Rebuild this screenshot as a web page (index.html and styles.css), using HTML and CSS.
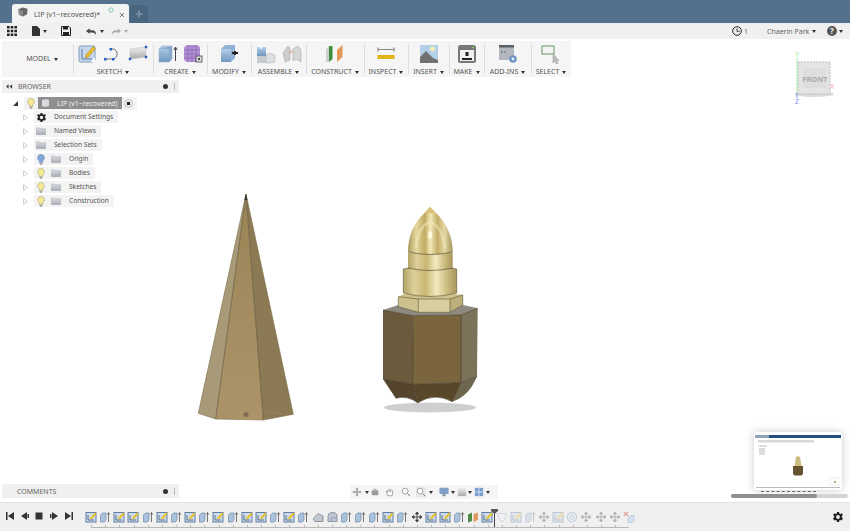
FILE: index.html
```html
<!DOCTYPE html>
<html lang="en">
<head>
<meta charset="utf-8">
<title>LIP (v1~recovered)*</title>
<link rel="stylesheet" href="styles.css">
</head>
<body>
<svg class="defs" aria-hidden="true">
  <defs>
    <linearGradient id="gold" x1="0" x2="1" y1="0" y2="0">
      <stop offset="0" stop-color="#b3a465"/><stop offset=".2" stop-color="#ddd09a"/><stop offset=".42" stop-color="#c9b774"/><stop offset=".62" stop-color="#f2ebc0"/><stop offset=".8" stop-color="#cfc085"/><stop offset="1" stop-color="#a8965a"/>
    </linearGradient>
    <linearGradient id="bullet" x1="0" x2="1" y1="0" y2="0">
      <stop offset="0" stop-color="#a8995c"/><stop offset=".18" stop-color="#e4d9a0"/><stop offset=".38" stop-color="#c2ab62"/><stop offset=".5" stop-color="#f2e9bb"/><stop offset=".66" stop-color="#c4ae68"/><stop offset=".82" stop-color="#e3d8a5"/><stop offset="1" stop-color="#a2925a"/>
    </linearGradient>
    <linearGradient id="pyr" x1="0" x2="0" y1="0" y2="1"><stop offset="0" stop-color="#9a8456"/><stop offset="1" stop-color="#ac9468"/></linearGradient>
    <linearGradient id="blueBox" x1="0" x2="0" y1="0" y2="1"><stop offset="0" stop-color="#b5cfe8"/><stop offset="1" stop-color="#6f97c0"/></linearGradient>
    <linearGradient id="grayBox" x1="0" x2="0" y1="0" y2="1"><stop offset="0" stop-color="#f0f0f0"/><stop offset="1" stop-color="#a9a9a9"/></linearGradient>
    <linearGradient id="folder" x1="0" x2="0" y1="0" y2="1"><stop offset="0" stop-color="#dcdfe4"/><stop offset="1" stop-color="#a4a9b2"/></linearGradient>
    <symbol id="sk" viewBox="0 0 12 12"><rect x="1" y="1.500" width="10" height="9.500" fill="#cfdcec" stroke="#5d7da6"/><path d="M3 9V4M3 9H9" stroke="#456" fill="none" stroke-width=".8"/><path d="M5 7 10 1.500 11.500 3 6.500 8.500Z" fill="#e9c22b"/></symbol>
    <symbol id="ex" viewBox="0 0 12 12"><path d="M1.500 4 3.500 2H7V9L5.500 11H1.500Z" fill="#a9c3de" stroke="#7189a3" stroke-width=".7"/><path d="M9.500 11V2M8.300 3.500 9.500 1.500 10.700 3.500" stroke="#555" fill="none" stroke-width=".8"/></symbol>
    <symbol id="ch" viewBox="0 0 12 12"><path d="M1 8 6 2.500 11 5V10.500H3Z" fill="#c2c8d0" stroke="#7c8590" stroke-width=".8"/></symbol>
    <symbol id="fi" viewBox="0 0 12 12"><path d="M2 10.500V5A4 4 0 0 1 6 1.500 4 4 0 0 1 11 6V10.500Z" fill="#bfc9d6" stroke="#7c8590" stroke-width=".8"/><path d="M5 10V7H10" fill="none" stroke="#88a" stroke-width=".7"/></symbol>
    <symbol id="mv" viewBox="0 0 12 12"><path d="M6 1V11M1 6H11M6 1 4.500 3H7.500ZM6 11 4.500 9H7.500ZM1 6 3 4.500V7.500ZM11 6 9 4.500V7.500Z" stroke="#444" fill="#444" stroke-width=".9"/></symbol>
    <symbol id="pl" viewBox="0 0 12 12"><path d="M1 3.500 5 1.500V10L1 11.500Z" fill="#4d8a45"/><path d="M6.500 3 11 1.500V9L6.500 11Z" fill="#e09a5f"/></symbol>
    <symbol id="sh" viewBox="0 0 12 12"><path d="M1.500 2.500H10.500L9 8 6 11 3 8Z" fill="#eef2f6" stroke="#9aa6b3"/></symbol>
    <symbol id="ri" viewBox="0 0 12 12"><circle cx="6" cy="6" r="4.700" fill="none" stroke="#7d9fc6" stroke-width="1.200"/><circle cx="6" cy="6" r="2.600" fill="#c6d4e4" stroke="#7d9fc6" stroke-width=".8"/></symbol>
    <symbol id="de" viewBox="0 0 12 12"><path d="M1 1 5 5M5 1 1 5" stroke="#d65a5a" stroke-width="1.100"/><path d="M5 6 8 4.500H11V10L9.500 11.500H5Z" fill="#bdd4ea" stroke="#86a7c8" stroke-width=".7"/></symbol>
    <symbol id="bulb" viewBox="0 0 8 11"><path d="M4 .5A3.300 3.300 0 0 1 5.800 6.600V8.300H2.200V6.600A3.300 3.300 0 0 1 4 .5Z" fill="#f4ea94" stroke="#a9a27a" stroke-width=".6"/><path d="M2.500 9.200H5.500M3 10.300H5" stroke="#888" stroke-width=".8"/></symbol>
    <symbol id="bulbB" viewBox="0 0 8 11"><path d="M4 .5A3.300 3.300 0 0 1 5.800 6.600V8.300H2.200V6.600A3.300 3.300 0 0 1 4 .5Z" fill="#7fa9dc" stroke="#6584a8" stroke-width=".6"/><path d="M2.500 9.200H5.500M3 10.300H5" stroke="#888" stroke-width=".8"/></symbol>
    <symbol id="fold" viewBox="0 0 10 8"><path d="M.3 1H3.800L4.600 1.800H9.700V7.700H.3Z" fill="url(#folder)" stroke="#a4a8af" stroke-width=".5"/></symbol>
    <symbol id="tri" viewBox="0 0 5 7"><path d="M.6.7 4.400 3.500.6 6.300Z" fill="#fff" stroke="#b4b4b4" stroke-width=".7"/></symbol>
  </defs>
</svg>

<div class="app">
  <header class="titlebar">
    <div class="tab">
      <svg class="tab-cube" viewBox="0 0 11 11"><path d="M.5 2.500 5 .5 10.500 2 10 8 5.500 10.500 1 8.500Z" fill="#666"/><path d="M.5 2.500 5.500 4.300V10.500L1 8.500Z" fill="#8a8a8a"/></svg>
      <span class="tab-name">LIP (v1~recovered)*</span>
      <svg class="tab-spin" viewBox="0 0 7 7"><circle cx="3.500" cy="3.500" r="2.500" fill="none" stroke="#74c4b0"/></svg>
      <svg class="tab-x" viewBox="0 0 7 7"><path d="M1 1 6 6M6 1 1 6" stroke="#666" stroke-width="1"/></svg>
    </div>
    <div class="tab-new">
      <svg viewBox="0 0 8 8"><path d="M4 .5V7.500M.5 4H7.500" stroke="#7d93a9" stroke-width="1.600"/></svg>
    </div>
  </header>

  <div class="appbar">
    <svg class="ic-grid" viewBox="0 0 10 10"><path d="M0 0H2.600V2.600H0ZM3.700 0H6.300V2.600H3.700ZM7.400 0H10V2.600H7.400ZM0 3.700H2.600V6.300H0ZM3.700 3.700H6.300V6.300H3.700ZM7.400 3.700H10V6.300H7.400ZM0 7.400H2.600V10H0ZM3.700 7.400H6.300V10H3.700ZM7.400 7.400H10V10H7.400Z" fill="#222"/></svg>
    <svg class="ic-doc" viewBox="0 0 8 10"><path d="M0 0H5L8 3V10H0Z" fill="#333"/></svg>
    <span class="caret cr-doc"></span>
    <svg class="ic-save" viewBox="0 0 10 10"><path d="M.5.5H8L9.500 2V9.500H.5Z" fill="none" stroke="#222"/><path d="M2 1H7V3.500H2ZM2 6H8V9H2Z" fill="#222"/></svg>
    <svg class="ic-undo" viewBox="0 0 11 7"><path d="M0 3 4 0V2H7Q11 2 11 7 9 4.500 7 4.500H4V6Z" fill="#444"/></svg>
    <span class="caret cr-undo"></span>
    <svg class="ic-redo" viewBox="0 0 11 7"><path d="M11 3 7 0V2H4Q0 2 0 7 2 4.500 4 4.500H7V6Z" fill="#aaa"/></svg>
    <span class="caret caret-off"></span>
    <span class="spacer"></span>
    <svg class="ic-clock" viewBox="0 0 10 10"><circle cx="5" cy="5" r="4.300" fill="none" stroke="#222"/><path d="M5 2.500V5.300H7.500" fill="none" stroke="#222" stroke-width=".9"/></svg>
    <span class="job-count">1</span>
    <span class="user">Chaerin Park</span>
    <span class="caret cr-user"></span>
    <svg class="ic-help" viewBox="0 0 10 10"><circle cx="5" cy="5" r="5" fill="#555"/><text x="5" y="7.800" class="help-q">?</text></svg>
    <span class="caret cr-help"></span>
  </div>

  <main class="canvas">
    <svg class="scene" viewBox="0 0 850 463" aria-hidden="true">
      <g transform="translate(0,-39)">
        <!-- pyramid -->
        <path d="M246 194 198.300 413.300 215.700 419Z" fill="#a89a78"/>
        <path d="M246 194 215.700 419 263.300 420Z" fill="url(#pyr)"/>
        <path d="M246 194 263.300 420 293.300 414.300Z" fill="#8b7a53"/>
        <path d="M246 194 215.700 419M246 194 263.300 420" stroke="#5e5138" stroke-width=".7" fill="none"/>
        <path d="M246 194 198.300 413.300 215.700 419 263.300 420 293.300 414.300Z" stroke="#7b6b45" stroke-width=".6" fill="none"/>
        <path d="M217 417Q240 408 264 411 280 413 283 415" stroke="#9a8d72" stroke-width=".5" fill="none"/>
        <path d="M245.500 194 244.500 200H247.500Z" fill="#333"/>
        <circle cx="246" cy="414.500" r="2.500" fill="#86694f"/>

        <!-- nut shadow -->
        <ellipse cx="430" cy="407.500" rx="46" ry="5" fill="#cfcfcf"/>
        <!-- hex base -->
        <path d="M383 310 398.300 305H463L477.700 308.300 461 315 412.700 315.700Z" fill="#8e8a80"/>
        <path d="M383 310 412.700 315.700 413.300 384.300 383 379Z" fill="#6b5a3b"/>
        <path d="M412.700 315.700 461 315 461 382.700 413.300 384.300Z" fill="#7a653f"/>
        <path d="M461 315 477.700 308.300 477 376.700 461 382.700Z" fill="#7c7259"/>
        <path d="M383 379 413.300 384.300 417.700 402.700Q407 395 395.700 398.300Z" fill="#54452c"/>
        <path d="M413.300 384.300 461 382.700 452.300 401.700Q435 392 417.700 402.700Z" fill="#584829"/>
        <path d="M461 382.700 477 376.700 471.700 386.700Q464 398 452.300 401.700Z" fill="#6f6650"/>
        <path d="M383 310 412.700 315.700 461 315 477.700 308.300M412.700 315.700 413.300 384.300 417.700 402.700M461 315 461 382.700 452.300 401.700M383 379 413.300 384.300 461 382.700 477 376.700M395.700 398.300Q407 395 417.700 402.700 435 392 452.300 401.700" stroke="#3f3524" stroke-width=".6" fill="none"/>
        <!-- hex collar -->
        <path d="M398.300 296.700 404 294H456L462.700 295 462.700 305 450 312.300H418.300L398.300 306.700Z" fill="#cdc28e"/>
        <path d="M418.300 299H450V312.300H418.300Z" fill="#d8cf9f"/>
        <path d="M450 299 462.700 295V305L450 312.300Z" fill="#bdb07a"/>
        <path d="M398.300 296.700 418.300 299H450L462.700 295M418.300 299V312.300M450 299V312.300M398.300 296.700V306.700L418.300 312.300H450L462.700 305V295" stroke="#5d5436" stroke-width=".6" fill="none"/>
        <!-- lower cylinder -->
        <path d="M403.300 269V293Q430 300 456.700 293V269Q430 262 403.300 269Z" fill="url(#gold)" stroke="#5d5436" stroke-width=".6"/>
        <!-- upper cylinder -->
        <path d="M408 253V268Q430 273 452.700 268V253Z" fill="url(#gold)"/>
        <path d="M408 268Q430 273 452.700 268" stroke="#5d5436" stroke-width=".7" fill="none"/>
        <!-- bullet -->
        <path d="M430 206.700 425 212.500C414 222 408 236 408 252Q430 257 452.700 252C452.700 236 446 222 435.500 212.500Z" fill="url(#bullet)"/>
        <path d="M430 206.700 425 212.500Q430 214 435.500 212.500Z" fill="#d8c27a"/>
        <path d="M408 252Q430 257 452.700 252" stroke="#5d5436" stroke-width=".7" fill="none"/>
        <path d="M416 248Q418 226 430 222 442 226 445 248" stroke="#f6efc8" stroke-width="2.500" stroke-opacity=".45" fill="none"/>
        <ellipse cx="430" cy="235" rx="2" ry="4" fill="#fffbe0"/>
      </g>
    </svg>

    <div class="toolbar">
      <div class="tgroup tg-model"><span class="tlabel model-label">MODEL <i class="caret"></i></span></div>

      <div class="tgroup">
        <div class="ticons i-sketch">
          <svg class="ti" viewBox="0 0 20 20"><rect x="1" y="2" width="16" height="16" rx="1.500" fill="#c9d8ea" stroke="#7f9bbd"/><path d="M4 5V15H14" stroke="#5577a5" fill="none"/><path d="M8 11 15 2.500 17.500 4.500 10.500 13 7.500 14Z" fill="#e8bd2e" stroke="#a5801a" stroke-width=".5"/><path d="M13 17H19M16 14V20" stroke="#fff" stroke-width="1.500"/></svg>
          <svg class="ti" viewBox="0 0 20 20"><path d="M2 15H11A5.500 5.500 0 0 0 11 5H8" fill="none" stroke="#777" stroke-width="1"/><path d="M1 14H3.500V16.500H1ZM9 14H11.500V16.500H9ZM6.500 4H9V6.500H6.500Z" fill="#2a5fc4"/></svg>
          <svg class="ti" viewBox="0 0 20 20"><path d="M2 5 18 3V13L2 15Z" fill="url(#grayBox)" stroke="#bbb" stroke-width=".5"/><path d="M.8 13.800H3.200V16.200H.8ZM16.800 1.800H19.200V4.200H16.800ZM16.800 11.800H19.200V14.200H16.800Z" fill="#2a5fc4"/></svg>
        </div>
        <span class="tlabel">SKETCH <i class="caret"></i></span>
      </div>

      <div class="tgroup">
        <div class="ticons">
          <svg class="ti" viewBox="0 0 20 20"><path d="M1 5 4 2H14V15L11 18H1Z" fill="url(#blueBox)" stroke="#8aa5c0" stroke-width=".5"/><path d="M11 5V18L14 15V2ZM1 5H11L14 2" fill="#88a9cb"/><path d="M17.500 17V4M16 6 17.500 3 19 6" stroke="#444" fill="none"/></svg>
          <svg class="ti" viewBox="0 0 20 20"><path d="M1 5Q1 1 6 1H13Q17 1 17 5V14Q17 18 13 18H5Q1 18 1 14Z" fill="#b28fd4"/><path d="M1 6H17M1 10H17M1 14H17M5 1V18M9 1V18M13 1V18" stroke="#8161a8" stroke-width=".6"/><rect x="13" y="12" width="6" height="6" fill="#ddd" stroke="#444" stroke-width=".8"/><path d="M15 14H17V16H15Z" fill="#444"/></svg>
        </div>
        <span class="tlabel">CREATE <i class="caret"></i></span>
      </div>

      <div class="tgroup">
        <div class="ticons">
          <svg class="ti" viewBox="0 0 20 20"><path d="M2 5 6 1H16V14L12 18H2Z" fill="#8fb1d4"/><path d="M2 5H12V18H2Z" fill="url(#blueBox)"/><path d="M13 9H19M16 7V11" stroke="#222" stroke-width="2"/></svg>
        </div>
        <span class="tlabel">MODIFY <i class="caret"></i></span>
      </div>

      <div class="tgroup">
        <div class="ticons i-asm">
          <svg class="ti" viewBox="0 0 20 20"><path d="M1 3H10V12H1Z" fill="url(#blueBox)"/><path d="M1 12H10V19H1Z" fill="#c7ccd2"/><path d="M10 11 14 9 19 11V18L14 19H10Z" fill="#dcdfe2" stroke="#aaa" stroke-width=".5"/><path d="M5 .5V5M3 2.500H7" stroke="#fff" stroke-width="1.300"/></svg>
          <svg class="ti" viewBox="0 0 20 20"><path d="M1 9 6 2 8 4V16L3 18Z" fill="#ccc" stroke="#aaa" stroke-width=".6"/><path d="M11 5 16 2 19 6V18L14 15 11 17Z" fill="#d6d6d6" stroke="#aaa" stroke-width=".6"/><path d="M7 9 11 7" stroke="#d87" stroke-width="1"/></svg>
        </div>
        <span class="tlabel">ASSEMBLE <i class="caret"></i></span>
      </div>

      <div class="tgroup">
        <div class="ticons">
          <svg class="ti" viewBox="0 0 20 20"><path d="M1 5 4 2V15L1 18Z" fill="#d8d8d8"/><path d="M4 2H7.500V15L4 18Z" fill="#3f8f3a"/><path d="M1 5H4V18H1Z" fill="#cfcfcf"/><path d="M12 6 17.500 1V13L12 18Z" fill="#e29657"/></svg>
        </div>
        <span class="tlabel">CONSTRUCT <i class="caret"></i></span>
      </div>

      <div class="tgroup">
        <div class="ticons">
          <svg class="ti" viewBox="0 0 20 20"><path d="M2 5.500H18" stroke="#888"/><path d="M2 3.500V7.500M18 3.500V7.500" stroke="#777"/><rect x="1.500" y="11" width="17" height="4" fill="#e2b418"/></svg>
        </div>
        <span class="tlabel">INSPECT <i class="caret"></i></span>
      </div>

      <div class="tgroup">
        <div class="ticons">
          <svg class="ti" viewBox="0 0 20 20"><rect x="1" y="1" width="18" height="18" fill="#b4d0e8"/><circle cx="13.500" cy="5" r="2.500" fill="#f4edb8"/><path d="M1 19V13L7 7 14 14 19 16V19Z" fill="#6f7173"/></svg>
        </div>
        <span class="tlabel">INSERT <i class="caret"></i></span>
      </div>

      <div class="tgroup">
        <div class="ticons">
          <svg class="ti" viewBox="0 0 20 20"><rect x="1" y="1" width="18" height="18" rx="2.500" fill="#777"/><rect x="3" y="6" width="14" height="11" fill="#f2f2f2"/><path d="M5 14H15V16H5ZM8.500 8H11.500V12H8.500Z" fill="#222"/><circle cx="16" cy="3.500" r="1" fill="#7fc65c"/></svg>
        </div>
        <span class="tlabel">MAKE <i class="caret"></i></span>
      </div>

      <div class="tgroup">
        <div class="ticons">
          <svg class="ti" viewBox="0 0 20 20"><rect x="1" y="1" width="15" height="15" fill="#b3b8bf"/><rect x="1" y="1" width="15" height="2.500" fill="#5a5f66"/><path d="M3 7 4.500 8 3 9M6 8H8" stroke="#555" stroke-width=".7" fill="none"/><circle cx="15" cy="15" r="3.800" fill="#6f94c4"/><circle cx="15" cy="15" r="1.400" fill="#e8eef6"/></svg>
        </div>
        <span class="tlabel">ADD-INS <i class="caret"></i></span>
      </div>

      <div class="tgroup">
        <div class="ticons">
          <svg class="ti" viewBox="0 0 20 20"><rect x="1" y="2" width="12" height="8" fill="none" stroke="#7da67d" stroke-width="1.200"/><path d="M12 10V19L14 17 15.500 20 17 19.500 15.500 16.500H18Z" fill="#bbb" stroke="#999" stroke-width=".5"/></svg>
        </div>
        <span class="tlabel">SELECT <i class="caret"></i></span>
      </div>
    </div>

    <div class="side">
      <section class="panel browser-head">
        <svg class="pin" viewBox="0 0 8 5"><path d="M0 2.500 3 0V5ZM4 2.500 7 0V5Z" fill="#444"/></svg>
        <span class="panel-title">BROWSER</span>
        <span class="panel-dot"></span>
        <span class="panel-grip"></span>
      </section>
      <ul class="tree">
        <li class="row root">
          <svg class="open-tri" viewBox="0 0 6 6"><path d="M6 0V6H0Z" fill="#333"/></svg>
          <div class="chip chip-root">
            <svg class="bulb"><use href="#bulb"/></svg>
            <span class="root-sel">
              <svg class="root-doc" viewBox="0 0 8 9"><path d="M0 1 5 0 8 1V8L3 9 0 8Z" fill="#d8dbe0"/></svg>
              LIP (v1~recovered)
            </span>
            <span class="radio"></span>
          </div>
        </li>
        <li class="row"><svg class="tri"><use href="#tri"/></svg><div class="chip">
          <svg class="gear" viewBox="0 0 10 10"><path d="M4 0H6L6.300 1.400 7.500 2 8.800 1.200 9.900 3 8.800 3.900V5.100L9.900 6.500 8.800 8.400 7.500 8 6.300 8.600 6 10H4L3.700 8.600 2.500 8 1.200 8.400.1 6.500 1.200 5.100V3.900L.1 3 1.200 1.200 2.500 2 3.700 1.400Z" fill="#222"/><circle cx="5" cy="5" r="1.900" fill="#f3f3f3"/></svg>
          <span class="lbl">Document Settings</span></div></li>
        <li class="row"><svg class="tri"><use href="#tri"/></svg><div class="chip"><svg class="fold"><use href="#fold"/></svg><span class="lbl">Named Views</span></div></li>
        <li class="row"><svg class="tri"><use href="#tri"/></svg><div class="chip"><svg class="fold"><use href="#fold"/></svg><span class="lbl">Selection Sets</span></div></li>
        <li class="row"><svg class="tri"><use href="#tri"/></svg><div class="chip"><svg class="bulb"><use href="#bulbB"/></svg><svg class="fold fold-b"><use href="#fold"/></svg><span class="lbl">Origin</span></div></li>
        <li class="row"><svg class="tri"><use href="#tri"/></svg><div class="chip"><svg class="bulb"><use href="#bulb"/></svg><svg class="fold fold-b"><use href="#fold"/></svg><span class="lbl">Bodies</span></div></li>
        <li class="row"><svg class="tri"><use href="#tri"/></svg><div class="chip"><svg class="bulb"><use href="#bulb"/></svg><svg class="fold fold-b"><use href="#fold"/></svg><span class="lbl">Sketches</span></div></li>
        <li class="row"><svg class="tri"><use href="#tri"/></svg><div class="chip"><svg class="bulb"><use href="#bulb"/></svg><svg class="fold fold-b"><use href="#fold"/></svg><span class="lbl">Construction</span></div></li>
      </ul>
      <section class="panel comments">
        <span class="panel-title">COMMENTS</span>
        <span class="panel-dot"></span>
        <span class="panel-grip"></span>
      </section>
    </div>

    <svg class="viewcube" viewBox="0 0 44 56" aria-hidden="true">
      <ellipse cx="24" cy="44" rx="20" ry="3" fill="#dcdcdc"/>
      <path d="M8 12H40V44H8Z" fill="#e4e4e4" stroke="#bcbcbc" stroke-dasharray="2 1"/>
      <rect x="13" y="18" width="23" height="20" fill="#dedede"/>
      <text x="25" y="32" class="cube-text">FRONT</text>
      <path d="M7 8V43" stroke="#a8e8a8" stroke-width="1"/>
      <text x="7" y="7" class="axis axis-y">Y</text>
      <text x="42" y="39" class="axis axis-x">X</text>
      <path d="M7 43V48" stroke="#8c8cf0"/>
      <text x="7" y="54" class="axis axis-z">Z</text>
    </svg>

    <div class="navbar">
      <svg class="nv nv-a" viewBox="0 0 12 12"><path d="M6 1V11M1 6H11" stroke="#777" stroke-width="1"/><circle cx="6" cy="2.500" r="1.500" fill="#aaa"/><circle cx="6" cy="9.500" r="1.500" fill="#aaa"/><circle cx="2.500" cy="6" r="1.500" fill="#aaa"/><circle cx="9.500" cy="6" r="1.500" fill="#aaa"/></svg>
      <i class="caret nc"></i>
      <svg class="nv nv-b" viewBox="0 0 12 12"><rect x="2" y="4" width="8" height="6" rx="1" fill="#9a9a9a"/><path d="M4 2H8V4H4Z" fill="#bbb"/></svg>
      <svg class="nv nv-c" viewBox="0 0 12 12"><path d="M3 6V3.500M5 6V2M7 6V2.500M9 6.500V4M3 6 1.500 5.500 3.500 10.500H8.500L9.500 6.500" stroke="#888" fill="#fff" stroke-width=".9"/></svg>
      <svg class="nv nv-d" viewBox="0 0 12 12"><circle cx="5" cy="5" r="3.500" fill="#fff" stroke="#8a9098"/><path d="M8 8 11 11" stroke="#777" stroke-width="1.200"/></svg>
      <svg class="nv nv-c" viewBox="0 0 12 12"><rect x="1" y="1" width="10" height="10" fill="none" stroke="#bbb" stroke-dasharray="1 1"/><circle cx="5" cy="5" r="3.500" fill="#fff" stroke="#8a9098"/><path d="M8 8 11 11" stroke="#777" stroke-width="1.200"/></svg>
      <i class="caret nc"></i>
      <svg class="nv nv-d" viewBox="0 0 12 12"><rect x=".5" y="1" width="11" height="7.500" rx="1" fill="#7f9fc6"/><path d="M4 8.500H8V11H4Z" fill="#8c99a8"/></svg>
      <i class="caret ne"></i>
      <svg class="nv nv-f" viewBox="0 0 12 12"><rect x="1" y="1" width="10" height="10" fill="url(#grayBox)"/></svg>
      <i class="caret ne"></i>
      <svg class="nv nv-f" viewBox="0 0 12 12"><path d="M1 1H11V11H1Z" fill="#7b9fd0"/><path d="M1 6H11M6 1V11" stroke="#dce6f2"/></svg>
      <i class="caret ne"></i>
    </div>

    <div class="thumb">
      <svg class="thumb-pic" viewBox="0 0 88 58" aria-hidden="true">
        <path d="M1 3H15V6H1Z" fill="#8ea3b8"/>
        <path d="M15 3H87V6H15Z" fill="#234f82"/>
        <path d="M4 8H60V10.500H4Z" fill="#d5d8dc"/>
        <path d="M5 13H13V15H5ZM5 16H11V23H5Z" fill="#dcdcdc"/>
        <path d="M42 25 44 24 46 25 47.500 34H40.500Z" fill="#cdbd80"/>
        <path d="M39 34H49V42L47.500 43.500H40.500L39 42Z" fill="#65532f"/>
        <path d="M76 46H86V53H76Z" fill="#fff" stroke="#ddd" stroke-width=".5"/>
        <circle cx="81" cy="50" r="1" fill="#a08a4c"/>
        <path d="M2 55H86V56H2Z" fill="#bcbcbc"/>
      </svg>
    </div>
    <div class="thumb-label"></div>
    <div class="scrollbar"><div class="scrollbar-fill"></div></div>
  </main>

  <footer class="timeline">
    <div class="controls">
      <svg class="ctl" viewBox="0 0 8 8"><path d="M0 0H1.500V8H0ZM8 0V8L2 4Z" fill="#333"/></svg>
      <svg class="ctl" viewBox="0 0 8 8"><path d="M6 0V8L0 4ZM6.500 2H8V6H6.500Z" fill="#333"/></svg>
      <svg class="ctl" viewBox="0 0 8 8"><rect x=".5" y=".5" width="7" height="7" fill="#333"/></svg>
      <svg class="ctl" viewBox="0 0 8 8"><path d="M2 0V8L8 4ZM0 2H1.500V6H0Z" fill="#333"/></svg>
      <svg class="ctl" viewBox="0 0 8 8"><path d="M8 0H6.500V8H8ZM0 0V8L6 4Z" fill="#333"/></svg>
    </div>
    <div class="track">
      <svg class="tk"><use href="#sk"/></svg><svg class="tk"><use href="#ex"/></svg><svg class="tk"><use href="#sk"/></svg><svg class="tk"><use href="#sk"/></svg><svg class="tk"><use href="#ex"/></svg><svg class="tk"><use href="#sk"/></svg><svg class="tk"><use href="#ex"/></svg><svg class="tk"><use href="#sk"/></svg><svg class="tk"><use href="#ex"/></svg><svg class="tk"><use href="#sk"/></svg><svg class="tk"><use href="#ex"/></svg><svg class="tk"><use href="#sk"/></svg><svg class="tk"><use href="#sk"/></svg><svg class="tk"><use href="#ex"/></svg>
      <svg class="tk"><use href="#sk"/></svg><svg class="tk"><use href="#ex"/></svg><svg class="tk"><use href="#ch"/></svg><svg class="tk"><use href="#fi"/></svg><svg class="tk"><use href="#ex"/></svg><svg class="tk"><use href="#ex"/></svg><svg class="tk"><use href="#ex"/></svg><svg class="tk"><use href="#sk"/></svg><svg class="tk"><use href="#ex"/></svg><svg class="tk"><use href="#mv"/></svg><svg class="tk"><use href="#sk"/></svg><svg class="tk"><use href="#sk"/></svg><svg class="tk"><use href="#ex"/></svg><svg class="tk"><use href="#pl"/></svg><svg class="tk"><use href="#sk"/></svg>
      <svg class="tk off"><use href="#sh"/></svg><svg class="tk off"><use href="#sk"/></svg><svg class="tk off"><use href="#ex"/></svg><svg class="tk off"><use href="#mv"/></svg><svg class="tk off"><use href="#sk"/></svg><svg class="tk off"><use href="#ri"/></svg><svg class="tk off"><use href="#mv"/></svg><svg class="tk off"><use href="#mv"/></svg><svg class="tk off"><use href="#mv"/></svg><svg class="tk off2"><use href="#de"/></svg>
      <div class="ruler"></div>
      <svg class="marker" viewBox="0 0 7 18"><path d="M0 0H7V2L3.500 5 0 2Z" fill="#555"/><path d="M3.500 4V18" stroke="#444"/></svg>
    </div>
    <svg class="tl-gear" viewBox="0 0 10 10"><path d="M4 0H6L6.300 1.400 7.500 2 8.800 1.200 9.900 3 8.800 3.900V5.100L9.900 6.500 8.800 8.400 7.500 8 6.300 8.600 6 10H4L3.700 8.600 2.500 8 1.200 8.400.1 6.500 1.200 5.100V3.900L.1 3 1.200 1.200 2.500 2 3.700 1.400Z" fill="#222"/><circle cx="5" cy="5" r="1.900" fill="#f0f0f0"/></svg>
  </footer>
</div>
</body>
</html>
```
FILE: styles.css
```css
* { box-sizing: border-box; }
html, body { margin: 0; padding: 0; height: 100%; overflow: hidden; }
body { font-family: "Noto Sans", "DejaVu Sans", sans-serif; color: #444; background: #fff; }
.defs { position: absolute; width: 0; height: 0; }
svg { display: block; flex: none; }

.app { width: 850px; height: 531px; display: flex; flex-direction: column; }

/* title bar */
.titlebar { height: 23px; flex: none; background: #53708c; display: flex; align-items: flex-end; padding-left: 12px; gap: 1px; }
.tab { width: 117px; height: 19px; background: #f3f3f3; border-radius: 3px 3px 0 0; display: flex; align-items: center; padding-left: 6px; }
.tab-cube { width: 10px; height: 10px; margin-top: -3px; }
.tab-name { font-size: 7.200px; margin-left: 6px; color: #555; white-space: nowrap; width: 74px; }
.tab-spin { width: 6px; height: 6px; margin: -7px 0 0 0; }
.tab-x { width: 6px; height: 6px; margin: 2px 0 0 5px; }
.tab-new { width: 18px; height: 18px; background: #4a6580; border-radius: 2px 2px 0 0; display: flex; align-items: center; justify-content: center; }
.tab-new svg { width: 8px; height: 8px; }

/* app bar */
.appbar { height: 16px; flex: none; background: #f0f0f0; display: flex; align-items: center; padding: 0 7px 0 7px; }
.caret { display: inline-block; width: 0; height: 0; border-left: 2.500px solid transparent; border-right: 2.500px solid transparent; border-top: 3px solid #333; flex: none; }
.caret-off { border-top-color: #aaa; margin-left: 3px; }
.ic-grid { width: 10px; height: 10px; }
.ic-doc { width: 8px; height: 10px; margin-left: 15px; }
.cr-doc { margin-left: 3px; }
.ic-save { width: 10px; height: 10px; margin-left: 14px; }
.ic-undo { width: 10px; height: 7px; margin-left: 15px; }
.cr-undo { margin-left: 4px; }
.ic-redo { width: 9px; height: 7px; margin-left: 8px; }
.spacer { flex: 1; }
.ic-clock { width: 10px; height: 10px; }
.job-count { font-size: 7px; margin-left: 2px; color: #666; width: 4px; }
.user { font-size: 7px; margin-left: 19px; color: #666; white-space: nowrap; width: 41px; }
.cr-user { margin-left: 4px; }
.ic-help { width: 10px; height: 10px; margin-left: 11px; }
.help-q { font-size: 8px; font-weight: 700; fill: #f0f0f0; text-anchor: middle; }
.cr-help { margin-left: 2px; }

/* canvas */
.canvas { position: relative; flex: 1; min-height: 0; background: #fff; display: flex; flex-direction: column; padding: 2px 0 4px 2px; }
.scene { position: absolute; left: 0; top: 0; width: 850px; height: 463px; }

/* toolbar */
.toolbar { position: relative; width: 569px; height: 36px; flex: none; background: #f5f5f5; display: grid; grid-template-columns: 71px 80px 54px 44px 55px 58px 44px 41px 35px 47px 40px; }
.tgroup { display: flex; flex-direction: column; align-items: center; justify-content: flex-end; position: relative; }
.tgroup + .tgroup::before { content: ""; position: absolute; left: 0; top: 3px; bottom: 3px; width: 1px; background: #dedede; }
.ticons { height: 18px; margin-bottom: 4px; display: flex; gap: 5px; align-items: center; }
.ti { width: 20px; height: 20px; }
.i-asm { gap: 6px; }
.tlabel { font-size: 7px; color: #555; white-space: nowrap; display: flex; align-items: center; gap: 3px; line-height: 10px; }
.model-label { margin-bottom: 13px; }
.tg-model { padding-left: 9px; }

/* side panels */
.side { position: relative; width: 177px; flex: 1; min-height: 0; display: flex; flex-direction: column; padding-top: 3px; }
.panel { height: 13px; flex: none; background: #f0f0f0; display: flex; align-items: center; padding: 0 4px; position: relative; }
.pin { width: 7px; height: 5px; margin-right: 5px; }
.panel-title { font-size: 7px; color: #666; flex: 1; }
.panel-dot { width: 5px; height: 5px; border-radius: 50%; background: #333; margin-right: 6px; }
.panel-grip { width: 1px; height: 7px; background: #bbb; }
.comments { margin-top: auto; padding-left: 15px; height: 14px; }
.tree { list-style: none; margin: 3px 0 0; padding: 0; }
.row { height: 14px; display: flex; align-items: center; padding-left: 21px; }
.tri { width: 5px; height: 7px; }
.chip { height: 12px; background: #f3f3f3; display: inline-flex; align-items: center; margin-left: 6px; padding: 0 5px 0 2px; }
.lbl { font-size: 6.600px; line-height: 10px; margin-top: -1px; color: #555; white-space: nowrap; }
.gear { width: 9px; height: 9px; margin: 0 8px 0 1px; }
.fold { width: 10px; height: 8px; margin-right: 8px; }
.fold-b { margin-left: 6px; }
.bulb { width: 8px; height: 11px; margin-left: 1px; }
.root { padding-left: 11px; }
.open-tri { width: 5px; height: 5px; }
.chip-root { margin-left: 6px; padding: 0 4px 0 2px; height: 13px; }
.root-sel { width: 84px; height: 12px; background: #8e8e8e; color: #f2f2f2; font-size: 7px; margin-left: 3px; display: flex; align-items: center; white-space: nowrap; padding-left: 4px; gap: 8px; }
.root-doc { width: 7px; height: 8px; }
.radio { width: 9px; height: 9px; border-radius: 50%; background: radial-gradient(circle, #222 0 1.500px, #e8e8e8 2px); border: 1px solid #c4c4c4; margin-left: 2px; }

/* view cube */
.viewcube { position: absolute; left: 790px; top: 11px; width: 44px; height: 56px; }
.cube-text { font-size: 7.500px; font-weight: 700; fill: #aaa; text-anchor: middle; }
.axis { font-size: 7px; text-anchor: middle; }
.axis-y { fill: #9ce89c; }
.axis-x { fill: #f2a9a9; }
.axis-z { fill: #8c8cf0; }

/* navigation bar */
.navbar { position: absolute; left: 350px; top: 446px; width: 148px; height: 14px; background: #f5f5f5; display: flex; align-items: center; padding-left: 2px; }
.nv { width: 10px; height: 10px; }
.nc { margin-left: 3px; }
.ne { margin-left: 1.500px; }
.nv-b { margin-left: 1px; }
.nv-c { margin-left: 5px; }
.nv-d { margin-left: 6px; }
.nv-f { margin-left: 2px; }

/* thumbnail */
.thumb { position: absolute; left: 754px; top: 393px; width: 88px; height: 58px; background: #fff; border-radius: 2px; box-shadow: 0 0 8px rgba(0,0,0,.22); }
.thumb-pic { width: 88px; height: 58px; }
.thumb-label { position: absolute; left: 761px; top: 452px; width: 55px; height: 1px; border-top: 1px dashed #666; }
.scrollbar { position: absolute; left: 731px; top: 455px; width: 117px; height: 3.500px; background: #d4d4d4; border-radius: 2px; }
.scrollbar-fill { width: 86px; height: 100%; background: #8f8f8f; border-radius: 2px; }

/* timeline */
.timeline { height: 29px; flex: none; background: #f0f0f0; border-top: 1px solid #e2e2e2; display: flex; align-items: flex-start; padding-left: 6px; position: relative; }
.controls { display: flex; gap: 6.700px; margin-top: 9px; width: 79px; }
.ctl { width: 8px; height: 8px; }
.track { position: relative; display: flex; margin-top: 8px; padding-bottom: 5px; }
.tk { width: 12px; height: 12px; margin-right: 2.170px; }
.off { opacity: .35; }
.off2 { opacity: .55; }
.ruler { position: absolute; left: 6px; top: 14px; width: 538px; height: 3px; border-bottom: 1px solid #b8b8b8; background: repeating-linear-gradient(90deg, #b8b8b8 0 1px, transparent 1px 14.170px); }
.marker { position: absolute; left: 406px; top: -2px; width: 7px; height: 18px; }
.tl-gear { position: absolute; right: 7px; top: 9px; width: 10px; height: 10px; }
```
